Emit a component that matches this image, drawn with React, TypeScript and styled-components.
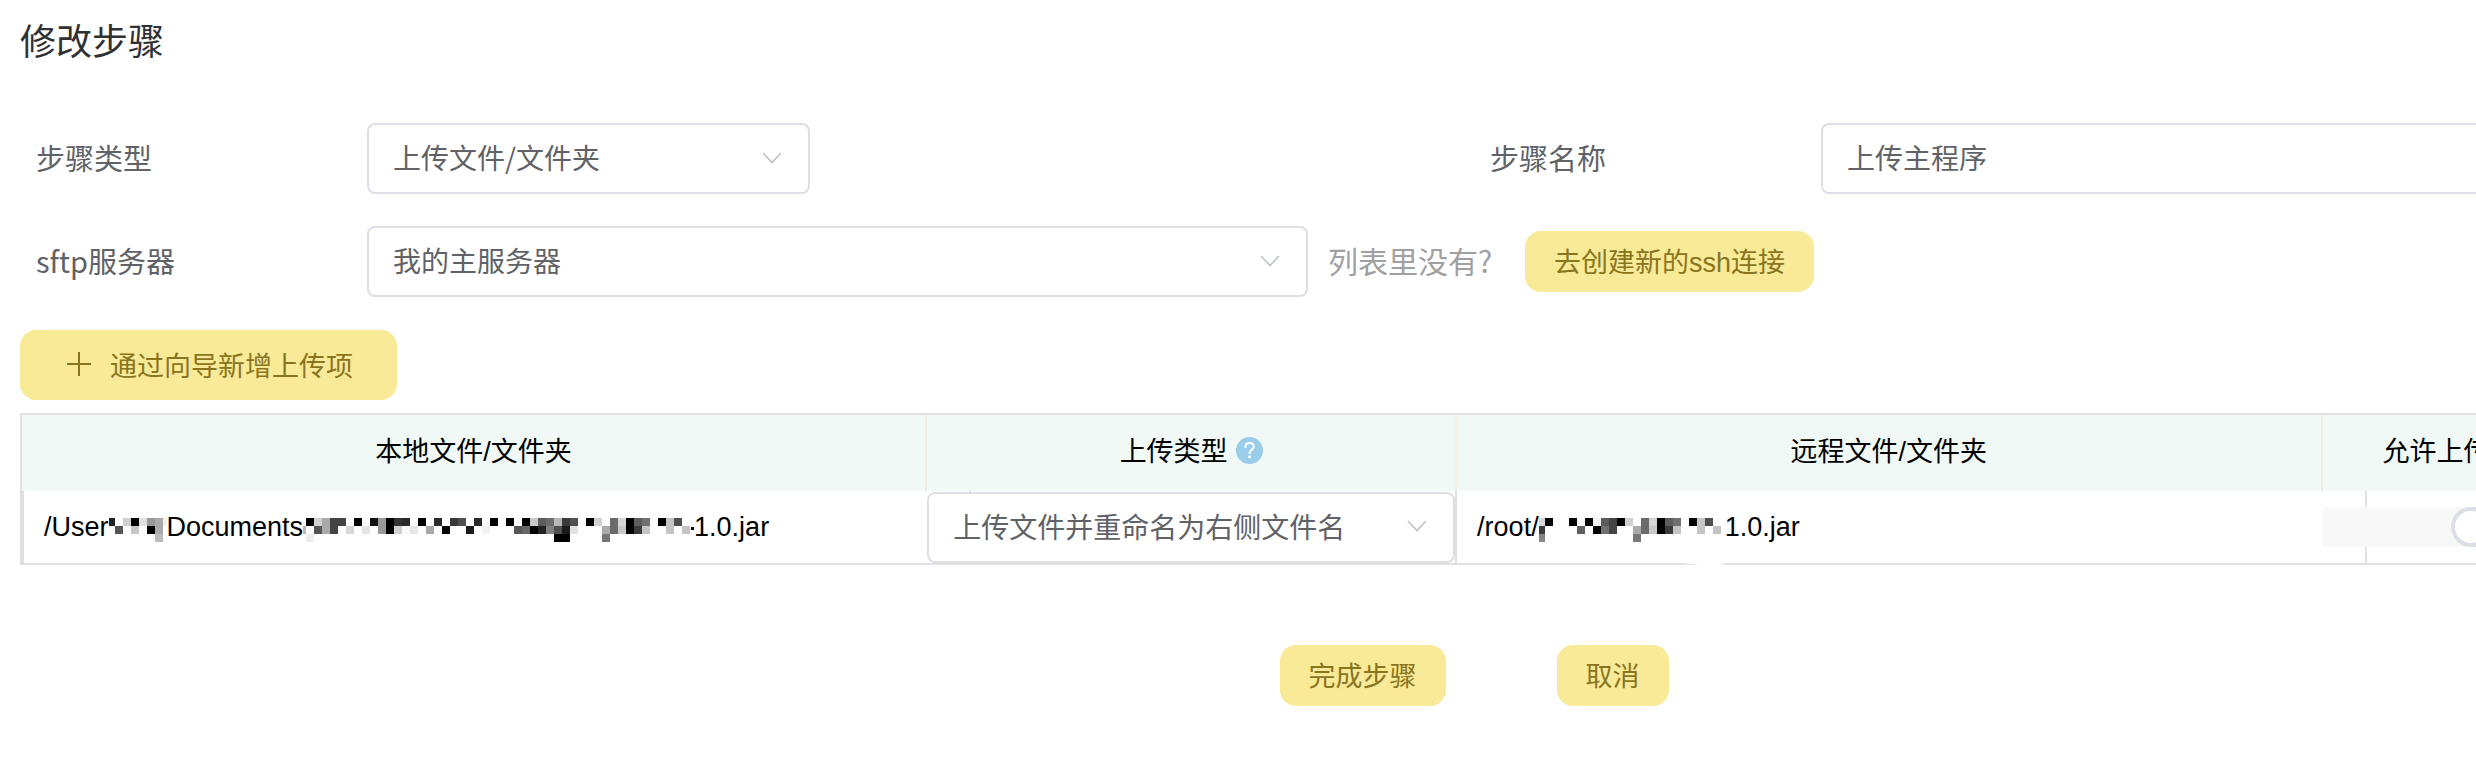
import React from "react";
import styled, { createGlobalStyle } from "styled-components";

const GlobalStyle = createGlobalStyle`
  * { box-sizing: border-box; }
  body {
    margin: 0;
    background: #fff;
    font-family: "Liberation Sans", "Noto Sans CJK SC", sans-serif;
    font-size: 27px;
    color: #000;
  }
  button, select, input { font: inherit; margin: 0; }
`;

const Viewport = styled.div`
  overflow-x: hidden;
`;

/* The form is wider than the window; the far right side is scrolled out of view. */
const Page = styled.main`
  width: calc(100% + 452px);
  padding: 10px 0 60px 20px;
`;

const Title = styled.h1`
  margin: 0 0 55px;
  font-family: "Noto Sans CJK SC", sans-serif;
  font-size: 36px;
  font-weight: 400;
  line-height: 58px;
  color: #303133;
`;

const FormRow = styled.div`
  display: grid;
  grid-template-columns: 1fr 1fr;
  margin-bottom: 32px;
`;

const Field = styled.div<{ $wide?: boolean }>`
  display: flex;
  align-items: center;
  grid-column: ${(p) => (p.$wide ? "1 / -1" : "auto")};
`;

const Label = styled.label`
  flex: 0 0 347px;
  padding: 0 0 3px 16px;
  font-family: "Noto Sans CJK SC", sans-serif;
  font-size: 29px;
  line-height: 44px;
  color: #606266;
`;

const SelectBox = styled.div<{ $width: string }>`
  position: relative;
  width: ${(p) => p.$width};
`;

const Select = styled.select`
  display: block;
  appearance: none;
  width: 100%;
  height: 71px;
  padding: 0 80px 3px 24px;
  border: 2px solid #dcdfe6;
  border-radius: 8px;
  background: #fff;
  color: #606266;
  font-family: "Noto Sans CJK SC", sans-serif;
  font-size: 28px;
`;

const Chevron = styled.svg`
  position: absolute;
  right: 27px;
  top: 50%;
  width: 22px;
  height: 14px;
  margin-top: -8px;
  pointer-events: none;
`;

const TextInput = styled.input`
  flex: 1;
  height: 71px;
  padding: 0 24px 3px;
  border: 2px solid #dcdfe6;
  border-radius: 8px;
  background: #fff;
  color: #606266;
  font-family: "Noto Sans CJK SC", sans-serif;
  font-size: 28px;
`;

const Hint = styled.span`
  width: 197px;
  margin-left: 20px;
  padding-bottom: 3px;
  font-family: "Noto Sans CJK SC", sans-serif;
  font-size: 30px;
  line-height: 44px;
  color: #a0a0a0;
  white-space: nowrap;
`;

const Button = styled.button<{ $large?: boolean }>`
  display: inline-flex;
  align-items: center;
  justify-content: center;
  height: ${(p) => (p.$large ? 70 : 61)}px;
  padding: 0 ${(p) => (p.$large ? 44 : 29)}px 2px;
  border: 0;
  border-radius: 16px;
  background: #f8ea97;
  color: #8a751f;
  font-size: 27px;
  white-space: nowrap;
  cursor: pointer;
`;

const PlusIcon = styled.svg`
  width: 30px;
  height: 30px;
  margin-right: 16px;
`;

const Toolbar = styled.div`
  display: flex;
  margin: 33px 0 13px;
`;

const Table = styled.table`
  width: 100%;
  table-layout: fixed;
  border-collapse: separate;
  border-spacing: 0;
  border: 2px solid #e0e0e0;
`;

const Head = styled.th<{ $start?: boolean }>`
  height: 76px;
  padding: 0 ${(p) => (p.$start ? 60 : 0)}px 2px;
  border-left: 2px solid #f3ede0;
  background: #f0f9f5;
  font-weight: 400;
  line-height: 40px;
  white-space: nowrap;
  text-align: ${(p) => (p.$start ? "left" : "center")};
  &:first-child { border-left: 0; }
`;

const HeadContent = styled.span`
  display: inline-flex;
  align-items: center;
  gap: 8px;
`;

const HelpIcon = styled.svg`
  width: 27px;
  height: 27px;
  margin-bottom: 4px;
`;

const Cell = styled.td<{ $line?: boolean }>`
  height: 72px;
  padding: 0;
  border-left: ${(p) => (p.$line ? "2px solid #e0e0e0" : "0")};
`;

/* A cell whose column rule is drawn behind its control. */
const RuledCell = styled.td`
  position: relative;
  height: 72px;
  padding: 0 0 0 2px;
  &::before {
    content: "";
    position: absolute;
    left: 44px;
    top: 0;
    bottom: 0;
    width: 2px;
    background: #e0e0e0;
  }
`;

const Path = styled.div`
  display: flex;
  align-items: center;
  padding-left: 20px;
  line-height: 40px;
  white-space: nowrap;
`;

const SwitchTrack = styled.label`
  position: relative;
  display: flex;
  height: 40px;
  padding-left: 128px;
  background: #f8f8f8;
`;

const Switch = styled.input`
  appearance: none;
  width: 80px;
  height: 40px;
  padding: 4px;
  border-radius: 20px;
  background: #dcdfe6;
  &::before {
    content: "";
    display: block;
    width: 32px;
    height: 32px;
    border-radius: 50%;
    background: #fff;
  }
  &:checked::before { margin-left: 40px; }
`;

const Actions = styled.div`
  display: flex;
  justify-content: center;
  gap: 111px;
  margin-top: 80px;
`;

const TableWrap = styled.div`
  position: relative;
`;

const Smudge = styled.svg`
  position: absolute;
  left: 1660px;
  bottom: 0;
  width: 45px;
  height: 2px;
`;

const DownArrow = () => (
  <Chevron viewBox="0 0 22 14" aria-hidden="true">
    <path d="M2 2 L11 11.5 L20 2" fill="none" stroke="#c0c4cc" strokeWidth="1.8" />
  </Chevron>
);

/* Redacted text: each row lists "column:grey" blocks of 8 by 8 pixels. */
function Mosaic({ rows, offset, width, dash }: { rows: string[]; offset: number; width: number; dash?: boolean }) {
  return (
    <svg
      width={width}
      height={32}
      viewBox={`${offset} -7 ${width} 32`}
      aria-hidden="true"
      shapeRendering="crispEdges"
    >
      {rows.map((row, y) =>
        row.split(" ").map((block) => {
          const [col, grey] = block.split(":");
          return (
            <rect key={`${y}-${col}`} x={Number(col) * 8} y={y * 8} width={8} height={8} fill={`#${grey}${grey}${grey}`} />
          );
        })
      )}
      {dash && <rect x={offset + width - 3} y={9} width={3} height={3} fill="#000" />}
    </svg>
  );
}

const userBlocks = ["0:22 2:d0 3:00 4:e0 5:99 6:aa 7:f0", "1:55 3:c8 5:00 6:aa", "6:bb"];
const folderBlocks = [
  "1:00 2:d0 3:aa 4:44 5:44 7:00 9:11 10:99 11:00 12:33 13:2a 15:00 17:2a 19:38 20:4f 22:2a 24:00 26:00 28:00 29:c8 30:5c 31:6c 32:b8 33:3a 34:50 36:00 37:d0 39:6a 40:d5 41:00 42:5c 43:70 45:00 46:c4 47:4e",
  "0:b8 2:55 3:aa 4:44 6:d8 8:e5 10:99 11:00 12:d0 13:fa 14:e8 16:aa 18:00 21:1a 23:f3 27:58 28:66 29:00 30:22 31:80 32:50 33:1a 34:e2 38:aa 39:6a 40:c8 41:00 42:3a 43:c4 46:c4 48:c4",
  "1:ee 32:00 33:00 38:77",
];
const rootBlocks = [
  "0:d8 1:00 4:00 6:00 7:f3 8:5c 9:44 10:00 11:d0 13:6a 14:d5 15:00 16:5c 17:70 19:00 20:c6 21:4e",
  "0:3a 5:60 7:00 8:70 9:45 12:aa 13:6a 14:c8 15:00 16:3a 17:c4 20:c4 22:c4",
  "0:85 12:77",
];

export default function App() {
  return (
    <Viewport>
      <GlobalStyle />
      <Page>
        <Title>修改步骤</Title>
        <FormRow>
          <Field>
            <Label htmlFor="type">步骤类型</Label>
            <SelectBox $width="443px">
              <Select id="type">
                <option>上传文件/文件夹</option>
              </Select>
              <DownArrow />
            </SelectBox>
          </Field>
          <Field>
            <Label htmlFor="name">步骤名称</Label>
            <TextInput id="name" type="text" defaultValue="上传主程序" />
          </Field>
        </FormRow>
        <FormRow>
          <Field $wide>
            <Label htmlFor="server">sftp服务器</Label>
            <SelectBox $width="941px">
              <Select id="server">
                <option>我的主服务器</option>
              </Select>
              <DownArrow />
            </SelectBox>
            <Hint>列表里没有?</Hint>
            <Button type="button">去创建新的ssh连接</Button>
          </Field>
        </FormRow>
        <Toolbar>
          <Button type="button" $large>
            <PlusIcon viewBox="0 0 30 30" aria-hidden="true">
              <path d="M15 3 V27 M3 15 H27" fill="none" stroke="#8a751f" strokeWidth="2" />
            </PlusIcon>
            通过向导新增上传项
          </Button>
        </Toolbar>
        <TableWrap>
          <Table>
            <colgroup>
              <col style={{ width: "31.1%" }} />
              <col style={{ width: "18.25%" }} />
              <col style={{ width: "29.8%" }} />
              <col />
            </colgroup>
            <thead>
              <tr>
                <Head scope="col">本地文件/文件夹</Head>
                <Head scope="col">
                  <HeadContent>
                    上传类型
                    <HelpIcon viewBox="0 0 27 27" aria-hidden="true">
                      <circle cx="13.5" cy="13.5" r="13.5" fill="#99cdea" />
                      <path
                        d="M9.4 10.2 C9.4 7.6 11.2 6 13.6 6 C16 6 17.8 7.5 17.8 9.8 C17.8 12.6 13.6 12.8 13.6 16.2"
                        fill="none"
                        stroke="#fff"
                        strokeWidth="2"
                        strokeLinecap="round"
                      />
                      <circle cx="13.6" cy="19.8" r="1.5" fill="#fff" />
                    </HelpIcon>
                  </HeadContent>
                </Head>
                <Head scope="col">远程文件/文件夹</Head>
                <Head scope="col" $start>允许上传</Head>
              </tr>
            </thead>
            <tbody>
              <tr>
                <Cell $line>
                  <Path>
                    /User
                    <Mosaic rows={userBlocks} offset={2} width={58} />
                    Documents
                    <Mosaic rows={folderBlocks} offset={5} width={391} dash />
                    1.0.jar
                  </Path>
                </Cell>
                <RuledCell>
                  <SelectBox $width="100%">
                    <Select aria-label="上传类型">
                      <option>上传文件并重命名为右侧文件名</option>
                    </Select>
                    <DownArrow />
                  </SelectBox>
                </RuledCell>
                <Cell $line>
                  <Path>
                    /root/
                    <Mosaic rows={rootBlocks} offset={2} width={186} />
                    1.0.jar
                  </Path>
                </Cell>
                <RuledCell>
                  <SwitchTrack>
                    <Switch type="checkbox" role="switch" aria-label="允许上传" />
                  </SwitchTrack>
                </RuledCell>
              </tr>
            </tbody>
          </Table>
          <Smudge viewBox="0 0 45 2" aria-hidden="true">
            <path d="M0 0 H45 L40 2 H20 Z" fill="#fff" />
          </Smudge>
        </TableWrap>
        <Actions>
          <Button type="submit">完成步骤</Button>
          <Button type="button">取消</Button>
        </Actions>
      </Page>
    </Viewport>
  );
}
